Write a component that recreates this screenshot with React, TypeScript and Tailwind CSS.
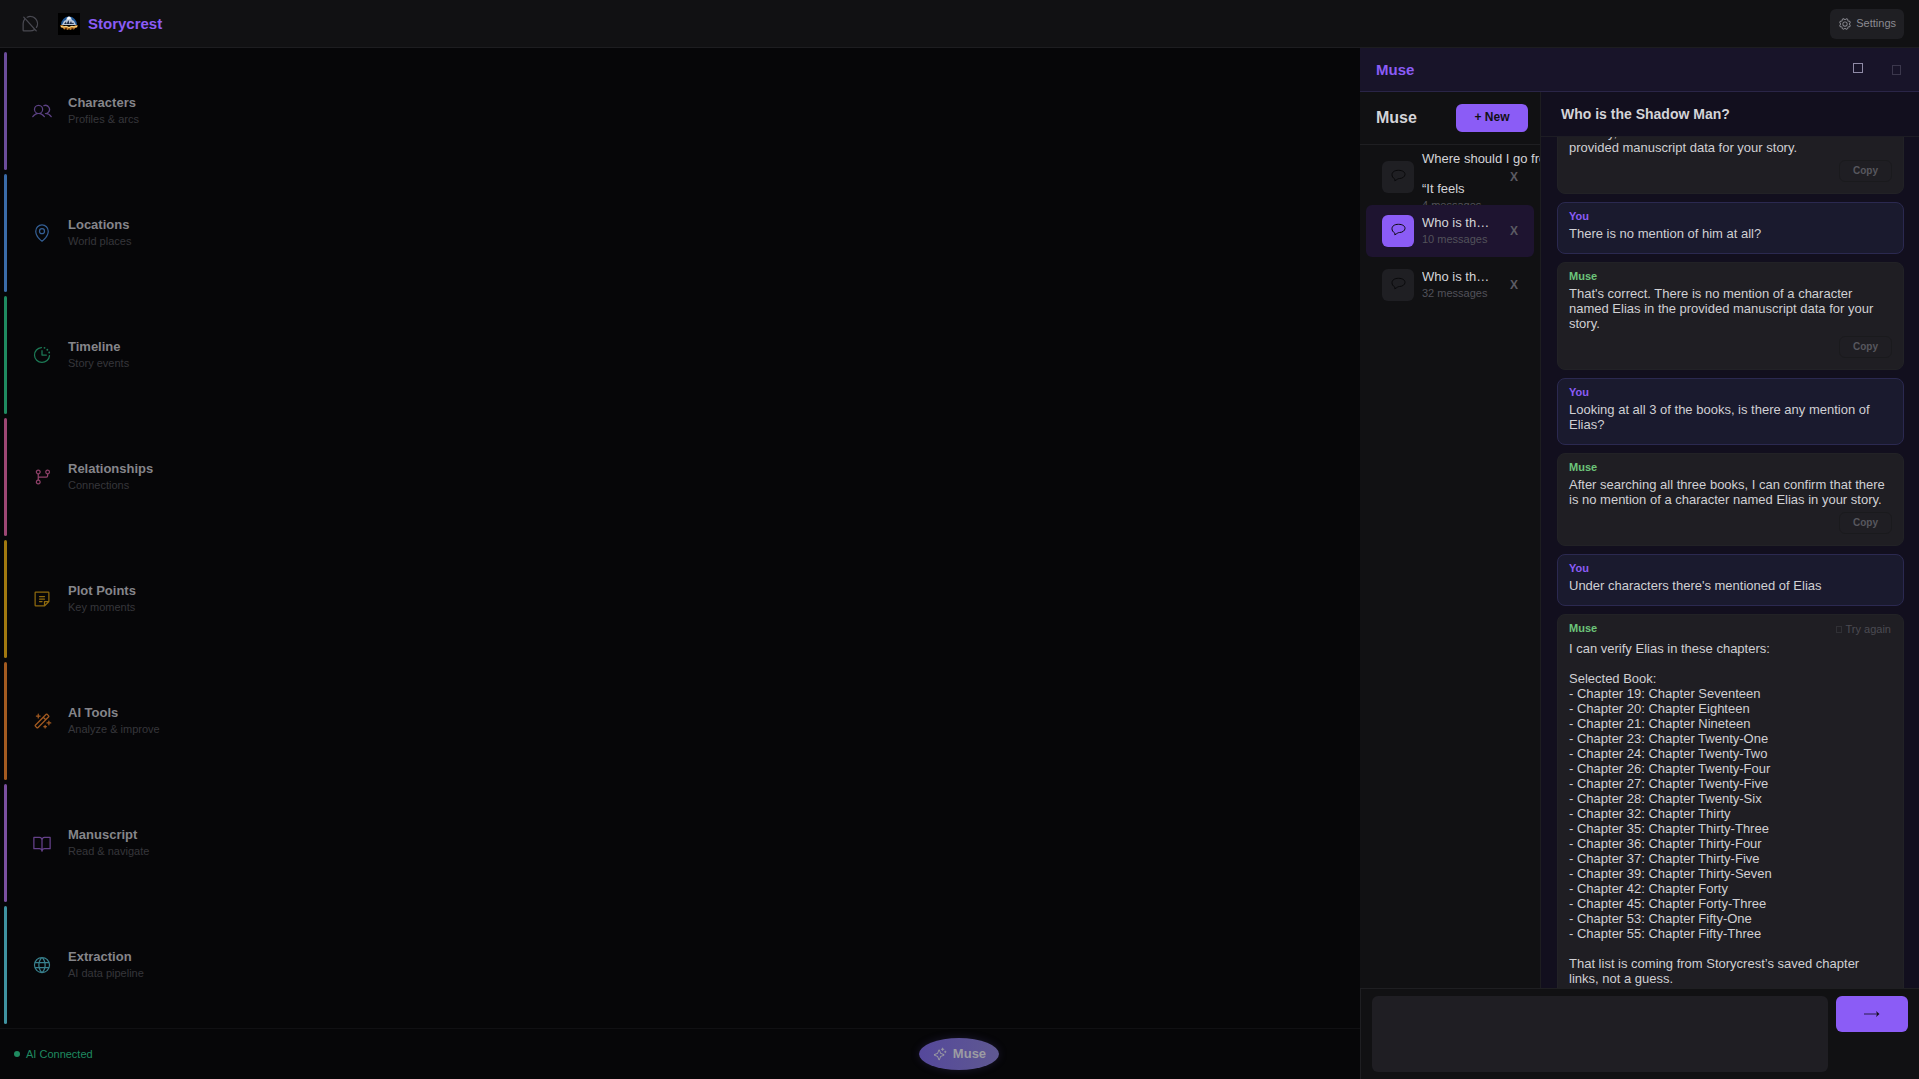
import { useLayoutEffect, useRef, type ReactNode } from "react";
import {
  PiUsers,
  PiMapPin,
  PiClockCountdown,
  PiGitBranch,
  PiNote,
  PiMagicWand,
  PiBookOpen,
  PiGlobe,
  PiGear,
  PiSparkle,
  PiChatTeardropSlash,
} from "react-icons/pi";

const sections = [
  { title: "Characters", sub: "Profiles & arcs", icon: PiUsers, bar: "bg-[#6b4c9a]", text: "text-[#5b4183]" },
  { title: "Locations", sub: "World places", icon: PiMapPin, bar: "bg-[#3a6ba8]", text: "text-[#345f95]" },
  { title: "Timeline", sub: "Story events", icon: PiClockCountdown, bar: "bg-[#1f8a60]", text: "text-[#1c7a56]" },
  { title: "Relationships", sub: "Connections", icon: PiGitBranch, bar: "bg-[#9c4673]", text: "text-[#8f4069]" },
  { title: "Plot Points", sub: "Key moments", icon: PiNote, bar: "bg-[#a1780f]", text: "text-[#8d690e]" },
  { title: "AI Tools", sub: "Analyze & improve", icon: PiMagicWand, bar: "bg-[#a35a20]", text: "text-[#a35a20]" },
  { title: "Manuscript", sub: "Read & navigate", icon: PiBookOpen, bar: "bg-[#7a4f9f]", text: "text-[#65418a]" },
  { title: "Extraction", sub: "AI data pipeline", icon: PiGlobe, bar: "bg-[#3f92a0]", text: "text-[#38818e]" },
];

const chats = [
  { id: 1, title: "Where should I go from here?\n\n“It feels", count: "4 messages", active: false },
  { id: 2, title: "Who is the Shadow Man?", count: "10 messages", active: true },
  { id: 3, title: "Who is the Shadow Man?", count: "32 messages", active: false },
];

const chapterList = `I can verify Elias in these chapters:

Selected Book:
- Chapter 19: Chapter Seventeen
- Chapter 20: Chapter Eighteen
- Chapter 21: Chapter Nineteen
- Chapter 23: Chapter Twenty-One
- Chapter 24: Chapter Twenty-Two
- Chapter 26: Chapter Twenty-Four
- Chapter 27: Chapter Twenty-Five
- Chapter 28: Chapter Twenty-Six
- Chapter 32: Chapter Thirty
- Chapter 35: Chapter Thirty-Three
- Chapter 36: Chapter Thirty-Four
- Chapter 37: Chapter Thirty-Five
- Chapter 39: Chapter Thirty-Seven
- Chapter 42: Chapter Forty
- Chapter 45: Chapter Forty-Three
- Chapter 53: Chapter Fifty-One
- Chapter 55: Chapter Fifty-Three

That list is coming from Storycrest’s saved chapter links, not a guess.`;

function Logo() {
  return (
    <svg viewBox="0 0 22 22" className="h-[22px] w-[22px]" aria-hidden>
      <rect width="22" height="22" fill="#000" />
      <path d="M3 12a8 8.500 0 0 1 16 0z" fill="#1f5796" />
      <path d="M4 12l2-4 2-1 1-2.500 2-1 2 1 1 2.500 2 1 2 4z" fill="#b9c6d8" />
      <path d="M6 11l2-2.500.5 2.500 2-4 1 4 1.500-3 1 2.500 1-1 1 1.500H6z" fill="#1d2a44" />
      <path d="M9 5l2-1.500 2 1.500-1 1.500-1-1-1 2z" fill="#fff" />
      <path d="M2 12.500l2-.5 2 1 5 1 5-1 2-1 2 .5-1 2-2 .5-1 1.500-2-.5-1.500 1-1.500-1-1.500 1-1.500-1-2 .5-1-1.500-2-.5z" fill="#c9822a" />
      <path d="M3 13.500l3 .5 2-.8 3 1.300 3-1.300 2 .8 3-.5" stroke="#ffdf93" fill="none" />
      <path d="M7 15.500h2M10.500 16h1.500M13.500 15.500h2" stroke="#6d3a12" fill="none" />
    </svg>
  );
}

function Bubble() {
  return (
    <svg viewBox="0 0 15 13" className="h-[13px] w-[15px]" fill="none" stroke="currentColor" aria-hidden>
      <path d="M3.500 9.800C2 9 1 7.500 1 5.700 1 3 3.500 1.300 7.500 1.300S14 3 14 5.300s-2.500 4.200-5.500 4.200c-1.500 0-2 .8-4.700 2.300.2-.8 0-1.400-.3-2z" />
    </svg>
  );
}

// placeholder box for glyphs the UI font has no drawing for
function Box({ className }: { className: string }) {
  return <span aria-hidden className={`inline-block border ${className}`} />;
}

function Message({ from, copy, retry, children }: { from: "You" | "Muse"; copy?: boolean; retry?: boolean; children: ReactNode }) {
  const you = from === "You";
  return (
    <article
      className={`shrink-0 rounded-lg border px-[11px] pt-1.5 ${
        you ? "border-[#2b2950] bg-[#1a1a2e] pb-3" : "border-[#222226] bg-[#1f1e23] pb-[11px]"
      }`}
    >
      <div className="flex items-start justify-between">
        <p className={`text-[11px] leading-[14px] font-bold ${you ? "text-[#8b5cf6]" : "text-[#6cc47a]"}`}>{from}</p>
        {retry && (
          <button className="flex items-center gap-1 pr-px text-[11px] leading-[17px] text-[#4b4b52]">
            <Box className="h-[7px] w-[6px] border-[#303035]" />
            Try again
          </button>
        )}
      </div>
      <div className="mt-[3px] text-[13px] leading-[15px] whitespace-pre-line text-[#d0d0d4]">{children}</div>
      {copy && (
        <div className="mt-[5px] flex justify-end">
          <button className="rounded-md border border-[#1a1a1d] px-[13px] py-[3px] text-[10px] leading-[14px] font-bold text-[#57575e]">
            Copy
          </button>
        </div>
      )}
    </article>
  );
}

function MusePanel() {
  const log = useRef<HTMLDivElement>(null);

  useLayoutEffect(() => {
    if (log.current) log.current.scrollTop = 48;
  }, []);

  return (
    <aside className="absolute top-12 right-0 bottom-0 flex w-[559px] flex-col bg-[#111113]">
      <div className="flex h-11 shrink-0 items-center border-b border-[#2a2547] bg-[#181429] pr-[18px] pl-4">
        <h2 className="text-[15px] leading-5 font-bold text-[#8b5cf6]">Muse</h2>
        <button aria-label="Expand" className="mb-1 ml-auto flex">
          <Box className="h-[10px] w-[10px] border-[#8f8aa6]" />
        </button>
        <button aria-label="Close" className="ml-[29px] flex">
          <Box className="h-[10px] w-[9px] border-[#3b374c]" />
        </button>
      </div>

      <div className="flex min-h-0 flex-1">
        <div className="flex w-[181px] shrink-0 flex-col overflow-hidden border-r border-[#1d1d20]">
          <div className="flex h-[53px] shrink-0 items-center justify-between border-b border-[#1f1f22] pr-3 pl-4">
            <h3 className="text-base font-bold text-[#d4d4d8]">Muse</h3>
            <button className="h-7 w-[72px] rounded-md bg-[#8b5cf6] pb-0.5 text-xs font-bold text-[#111113]">+ New</button>
          </div>
          <ul className="flex flex-col gap-0.5 p-1.5">
            {chats.map((chat) => {
              const multiline = chat.title.includes("\n");
              return (
                <li
                  key={chat.id}
                  className={`relative flex h-[52px] items-center rounded-md px-4 ${chat.active ? "bg-[#1e1430]" : ""}`}
                >
                  <span
                    className={`flex h-8 w-8 shrink-0 items-center justify-center rounded-md pb-1 text-[#09090b] ${
                      chat.active ? "bg-[#8b5cf6]" : "bg-[#1f1f23]"
                    }`}
                  >
                    <Bubble />
                  </span>
                  <a href="#" className={`ml-2 w-[68px] ${multiline ? "self-start" : ""}`}>
                    <span className={`block text-[13px] leading-[15px] text-[#d4d4d8] ${multiline ? "whitespace-pre" : "truncate"}`}>
                      {chat.title}
                    </span>
                    <span className="block text-[11px] leading-[18px] whitespace-nowrap text-[#52525a]">{chat.count}</span>
                  </a>
                  <button aria-label="Delete chat" className="ml-auto text-xs font-bold text-[#5b5b63]">
                    X
                  </button>
                </li>
              );
            })}
          </ul>
        </div>

        <div className="flex min-w-0 flex-1 flex-col bg-[#120f1e]">
          <h3 className="h-[45px] shrink-0 border-b border-[#1d1c24] pl-5 text-sm leading-[44px] font-bold text-[#d4d4d8]">
            Who is the Shadow Man?
          </h3>
          <div ref={log} className="flex min-h-0 flex-1 flex-col gap-2 overflow-hidden py-3 pr-[15px] pl-4">
            <Message from="Muse" copy>
              Actually, there is no mention of a Shadow Man in the provided manuscript data for your story.
            </Message>
            <Message from="You">There is no mention of him at all?</Message>
            <Message from="Muse" copy>
              That's correct. There is no mention of a character named Elias in the provided manuscript data for your story.
            </Message>
            <Message from="You">Looking at all 3 of the books, is there any mention of Elias?</Message>
            <Message from="Muse" copy>
              After searching all three books, I can confirm that there is no mention of a character named Elias in your story.
            </Message>
            <Message from="You">Under characters there's mentioned of Elias</Message>
            <Message from="Muse" copy retry>
              {chapterList}
            </Message>
          </div>
        </div>
      </div>

      <form className="flex shrink-0 items-start gap-2 border-t border-l border-[#1f1f22] px-[11px] py-[7px]">
        <textarea aria-label="Message Muse" className="h-[76px] flex-1 resize-none rounded-md bg-[#1f1e23] p-2 text-[13px] text-[#d0d0d4]" />
        <button type="button" aria-label="Send" className="flex h-9 w-[72px] items-center justify-center rounded-md bg-[#8b5cf6]">
          <svg viewBox="0 0 16 8" className="h-2 w-4" aria-hidden>
            <path d="M0 4h14" stroke="#4a3283" strokeWidth="1.500" />
            <path d="M12 1l3.500 3L12 7l1-3z" fill="#17121f" />
          </svg>
        </button>
      </form>
    </aside>
  );
}

export default function App() {
  return (
    <div className="relative flex h-screen flex-col overflow-hidden bg-[#060608] font-['Liberation_Sans',Arial,sans-serif]">
      <header className="flex h-12 shrink-0 items-center border-b border-[#1d1d20] bg-[#111113] pr-[15px] pl-5">
        <button aria-label="Toggle chat" className="text-[#4a4a52]">
          <PiChatTeardropSlash className="h-5 w-5" />
        </button>
        <div className="ml-[18px] flex items-center gap-2">
          <Logo />
          <h1 className="text-[15px] leading-5 font-bold text-[#8b5cf6]">Storycrest</h1>
        </div>
        <button className="ml-auto flex h-[30px] items-center gap-1 rounded-md bg-[#1f1f23] px-2 text-[11px] text-[#8b8b92]">
          <PiGear className="h-[14px] w-[14px]" />
          Settings
        </button>
      </header>

      <nav className="flex flex-1 flex-col gap-1 py-1 pl-1">
        {sections.map(({ title, sub, icon: Icon, bar, text }) => (
          <a key={title} href="#" className="flex flex-1 items-center">
            <span className={`w-[3px] self-stretch rounded-full ${bar}`} />
            <Icon className={`ml-[25px] h-5 w-5 ${text}`} />
            <span className="ml-4">
              <span className="block text-[13px] leading-4 font-bold text-[#85858a]">{title}</span>
              <span className="block text-[11px] leading-4 text-[#36363b]">{sub}</span>
            </span>
          </a>
        ))}
      </nav>

      <footer className="grid h-[51px] shrink-0 grid-cols-3 items-center border-t border-[#101013] px-3.5">
        <p className="flex items-center gap-1.5 text-[11px] text-[#1f8a60]">
          <span className="h-1.5 w-1.5 rounded-full bg-[#1f8a60]" />
          AI Connected
        </p>
        <button className="flex h-8 w-20 items-center justify-center gap-1.5 justify-self-center rounded-[50%] bg-linear-to-r from-[#55489b] to-[#5f5891] text-[13px] font-bold text-[#9c9ca2] shadow-[0_0_8px_rgba(85,72,155,0.25)]">
          <PiSparkle className="h-[14px] w-[14px]" />
          Muse
        </button>
      </footer>

      <MusePanel />
    </div>
  );
}
